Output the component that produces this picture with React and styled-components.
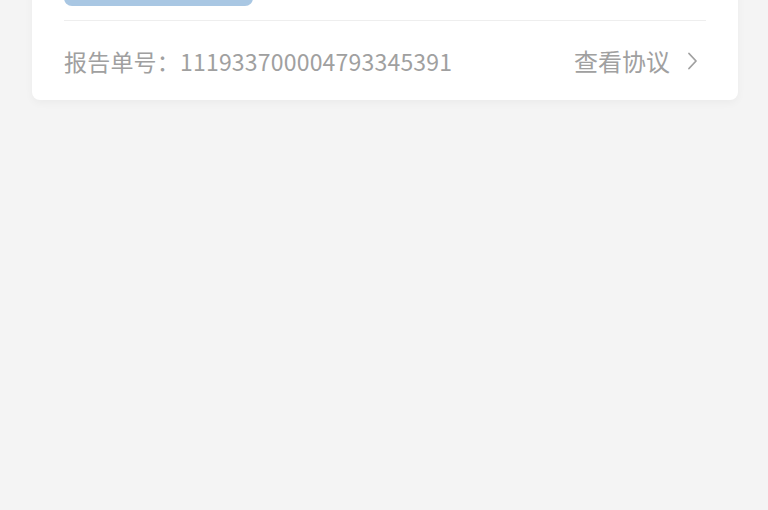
import React from 'react'
import styled, { createGlobalStyle } from 'styled-components'

const gray = '#a0a0a0'

const GlobalStyle = createGlobalStyle`
  html, body {
    margin: 0;
    padding: 0;
    background: #f4f4f4;
    font-family: "Noto Sans CJK SC", "Noto Sans", sans-serif;
  }
  body {
    height: 510px;
    overflow: hidden;
  }
`

const Page = styled.div`
  padding: 0 30px 0 32px;
`

// card is scrolled so only its lower part shows
const Card = styled.div`
  margin-top: -58px;
  background: #fff;
  border-radius: 8px;
  box-shadow: 0 3px 8px rgba(0, 0, 0, 0.04);
  padding: 0 32px;
`

const Actions = styled.div`
  padding-bottom: 14px;
  border-bottom: 1px solid #eeeeee;
`

const Button = styled.button`
  display: block;
  width: 189px;
  height: 64px;
  border: none;
  border-radius: 8px;
  background: #a9c7e3;
`

const Footer = styled.div`
  height: 79px;
  display: flex;
  align-items: center;
  justify-content: space-between;
  color: ${gray};
  font-size: 23px;
`

const OrderNo = styled.span`
  letter-spacing: 0.2px;
`

const Link = styled.a`
  display: flex;
  align-items: center;
  gap: 16px;
  margin-right: 8px;
  color: ${gray};
  font-size: 24px;
  text-decoration: none;
`

const Chevron = () => (
  <svg width="12" height="20" viewBox="0 0 12 20" fill="none">
    <path d="M3 2.5l7 7.5-7 7.5" stroke={gray} strokeWidth="1.8" strokeLinecap="round" strokeLinejoin="round" />
  </svg>
)

export default function App() {
  return (
    <>
      <GlobalStyle />
      <Page>
        <Card>
          <Actions>
            <Button aria-label="查看报告" />
          </Actions>
          <Footer>
            <OrderNo>报告单号：111933700004793345391</OrderNo>
            <Link href="#">
              查看协议
              <Chevron />
            </Link>
          </Footer>
        </Card>
      </Page>
    </>
  )
}
